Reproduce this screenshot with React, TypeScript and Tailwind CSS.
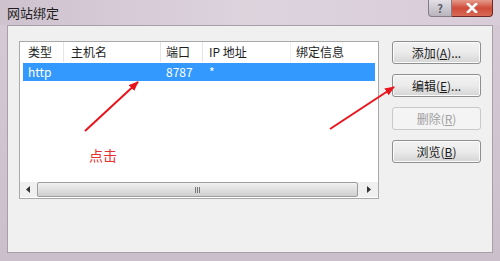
import React from "react";

const cols = [
  { label: "类型", w: "w-[44px]", pl: "pl-[8px]", b: "border-r border-[#e5e5e5]" },
  { label: "主机名", w: "w-[97px]", pl: "pl-[7px]", b: "border-r border-[#e5e5e5]" },
  { label: "端口", w: "w-[42px]", pl: "pl-[5px]", b: "border-r border-[#e5e5e5]" },
  { label: "IP 地址", w: "w-[88px]", pl: "pl-[6px]", b: "border-r border-[#f0f0f0]" },
  { label: "绑定信息", w: "w-[52px]", pl: "pl-[5px]", b: "border-r border-[#f3f3f3]" },
];

function Btn({ children, disabled }: { children: React.ReactNode; disabled?: boolean }) {
  return (
    <div
      className={
        "h-[23px] w-[89px] rounded-[3px] border flex items-center justify-center text-[12px] " +
        (disabled
          ? "border-[#c9c9c9] bg-[#f4f4f4] text-[#a0a0a0]"
          : "border-[#8e8f8f] bg-gradient-to-b from-[#f2f2f2] via-[#ebebeb] to-[#d5d5d5] text-[#1a1a1a] shadow-[inset_0_0_0_1px_#fbfbfb]")
      }
    >
      {children}
    </div>
  );
}

export default function App() {
  return (
    <div
      className="relative w-[500px] h-[261px] overflow-hidden bg-gradient-to-b from-[#d6cad6] to-[#cbbfcc] flex flex-col"
      style={{ fontFamily: '"Noto Sans CJK SC", "Liberation Sans", sans-serif' }}
    >
      {/* Title bar */}
      <div className="h-[25px] flex items-start shrink-0 bg-gradient-to-r from-[#cfc2cf] via-[#ddd3dd] to-[#d8ccd8]">
        <div className="pl-[7px] pt-[4px] text-[13px] leading-[17px] text-[#1e1e1e]">网站绑定</div>
        <div className="ml-auto mr-[7px] flex">
          <div className="w-[24px] h-[17px] rounded-bl-[4px] border border-t-0 border-[#857c86] bg-gradient-to-b from-[#e2dfe6] to-[#b9b4bd] flex items-center justify-center text-[11px] leading-none text-[#5b5b66] font-bold">
            ?
          </div>
          <div className="w-[41px] h-[17px] rounded-br-[4px] border border-l-0 border-t-0 border-[#6e2a24] bg-gradient-to-b from-[#e49a8c] via-[#cf4a3a] to-[#d86a55] flex items-center justify-center">
            <svg width="12" height="10" viewBox="0 0 12 10">
              <path d="M2 1 L10 9 M10 1 L2 9" stroke="#ffffff" strokeWidth="2.6" strokeLinecap="square" />
            </svg>
          </div>
        </div>
      </div>

      {/* Body */}
      <div className="flex-1 mx-[7px] mb-[8px] bg-[#f0f0f0] border border-[#a89fa9] flex pt-[15px] pl-[11px]">
        {/* List box */}
        <div className="w-[360px] h-[158px] border border-[#a9a9a9] bg-white flex flex-col">
          {/* header */}
          <div className="h-[20px] flex text-[12px] leading-[20px] text-[#1e1e1e]">
            {cols.map((c, i) => (
              <div key={i} className={`${c.w} ${c.pl} ${c.b} h-full whitespace-nowrap`}>
                {c.label}
              </div>
            ))}
          </div>
          {/* selected row */}
          <div className="mt-[1px] mx-[3px] h-[18px] bg-[#3399ff] flex text-[12px] leading-[18px] text-white">
            <div className="w-[41px] pl-[5px]">http</div>
            <div className="w-[97px]"></div>
            <div className="w-[42px] pl-[5px]">8787</div>
            <div className="pl-[6px]">*</div>
          </div>
          <div className="flex-1" />
          {/* horizontal scrollbar */}
          <div className="h-[15px] mb-[1px] flex items-stretch bg-[#f0f0f0]">
            <div className="w-[17px] flex items-center justify-center">
              <svg width="5" height="7" viewBox="0 0 5 7">
                <path d="M4 0 L0 3.5 L4 7 Z" fill="#333" />
              </svg>
            </div>
            <div className="flex-1 rounded-[2px] border border-[#9d9d9d] bg-gradient-to-b from-[#f1f1f1] via-[#e0e0e0] to-[#cfcfcf] flex items-center justify-center">
              <div className="flex gap-[1px]">
                <div className="w-[1px] h-[6px] bg-[#777]" />
                <div className="w-[1px] h-[6px] bg-[#777]" />
                <div className="w-[1px] h-[6px] bg-[#777]" />
              </div>
            </div>
            <div className="w-[20px] flex items-center justify-center">
              <svg width="5" height="7" viewBox="0 0 5 7">
                <path d="M1 0 L5 3.5 L1 7 Z" fill="#333" />
              </svg>
            </div>
          </div>
        </div>

        {/* Buttons */}
        <div className="ml-[13px] flex flex-col gap-[10px]">
          <Btn>
            添加(<span className="underline">A</span>)...
          </Btn>
          <Btn>
            编辑(<span className="underline">E</span>)...
          </Btn>
          <Btn disabled>
            删除(<span className="underline">R</span>)
          </Btn>
          <Btn>
            浏览(<span className="underline">B</span>)
          </Btn>
        </div>
      </div>

      {/* Annotations */}
      <svg className="absolute left-0 top-0 pointer-events-none" width="500" height="261" viewBox="0 0 500 261">
        <defs>
          <marker id="ah" markerWidth="10" markerHeight="8" refX="9" refY="4" orient="auto" markerUnits="userSpaceOnUse">
            <path d="M0 0 L10 4 L0 8 Z" fill="#e8141c" />
          </marker>
        </defs>
        <line x1="85" y1="131" x2="138" y2="82" stroke="#e8141c" strokeWidth="2" markerEnd="url(#ah)" />
        <line x1="330" y1="129" x2="394" y2="87" stroke="#e8141c" strokeWidth="2" markerEnd="url(#ah)" />
      </svg>
      <div className="absolute left-[89px] top-[146px] text-[14px] leading-[18px] text-[#ea3030]">点击</div>
    </div>
  );
}
